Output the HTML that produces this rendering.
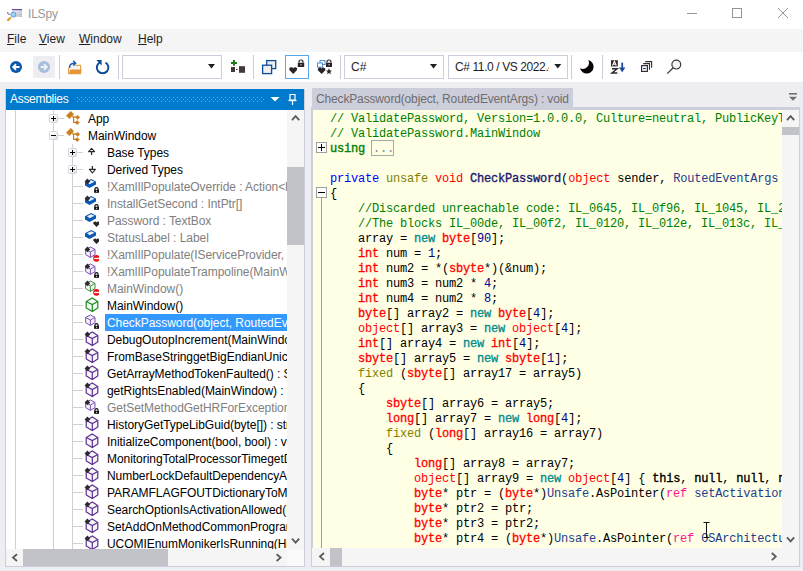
<!DOCTYPE html><html><head><meta charset="utf-8"><style>
*{margin:0;padding:0;box-sizing:border-box}
html,body{width:803px;height:571px;overflow:hidden;background:#EEEEF2;font-family:"Liberation Sans",sans-serif;font-size:12px;color:#1E1E1E}
.a{position:absolute}
svg{position:absolute;overflow:visible}
.mi{top:32px;color:#1E1E1E;letter-spacing:0px;white-space:nowrap}
.sep{top:55px;width:1px;height:24px;background:#CCCEDB}
.combo{top:55px;height:24px;border:1px solid #CCCEDB;background:#fff}
.tri{width:0;height:0;border-left:4px solid transparent;border-right:4px solid transparent;border-top:5px solid #1E1E1E}
.row{position:absolute;height:17px;white-space:nowrap;letter-spacing:-0.05px;line-height:17px;color:#000}
.g{color:#808080}
.sel{background:#3399FF;color:#fff}
.cl{position:absolute;left:330px;white-space:pre;font-family:"Liberation Mono",monospace;font-size:12px;letter-spacing:-0.2px;height:15px;line-height:15px;color:#000}
.c{color:#008000}
.kw{color:#0000FF}
.uns{color:#808000}
.rt{color:#FF0000}
.vt{color:#FF0000;-webkit-text-stroke:0.3px #FF0000}
.mc{color:#191970;-webkit-text-stroke:0.35px #191970}
.num{color:#00008B}
.nw{color:#008B8B;-webkit-text-stroke:0.3px #008B8B}
.ty{color:#1E3C8C}
.bd{-webkit-text-stroke:0.35px #000}
.rf{color:#FF1493}
.ns{color:#008000;-webkit-text-stroke:0.35px #008000}
.vl{position:absolute;width:1px;background:#D0D0D0}
.hl{position:absolute;height:1px;background:#D0D0D0}
.exp{position:absolute;width:9px;height:9px;border:1px solid #D2D2DE;border-radius:1.5px;background:linear-gradient(135deg,#FFFFFF 30%,#DCDCE6)}
</style></head><body>
<svg width="0" height="0" style="position:absolute">
<defs>
<symbol id="i_class" viewBox="0 0 16 16">
 <g fill="#CC7F1E"><path d="M6.8,1 L10,4.2 L5.5,8.9 L2,5.7 Z"/><path d="M11.2,7.3 L13.6,4.9 L16,7.3 L13.6,9.7 Z"/><path d="M10.8,12.6 L13.2,10.2 L15.6,12.6 L13.2,15 Z"/></g>
 <path d="M8,6.8 H12 M9.6,6.8 V12.4 H12" stroke="#CC7F1E" stroke-width="1.2" fill="none"/>
</symbol>
<symbol id="i_base" viewBox="0 0 16 16">
 <path d="M5.6,7.6 L8.6,4.3 L11.6,7.6 Z" fill="#fff" stroke="#2A2A2A" stroke-width="1.1" stroke-linejoin="round"/>
 <path d="M8.6,7.6 V11" stroke="#2A2A2A" stroke-width="1.2"/>
</symbol>
<symbol id="i_derived" viewBox="0 0 16 16">
 <path d="M6.4,8.4 L9.4,11.8 L12.4,8.4 Z" fill="#fff" stroke="#2A2A2A" stroke-width="1.1" stroke-linejoin="round"/>
 <path d="M9.4,5 V8.4" stroke="#2A2A2A" stroke-width="1.2"/>
</symbol>
<symbol id="slab" viewBox="0 0 16 16">
 <path d="M2,4.2 L8.1,1 L13,3.5 L13,6.5 L6.5,10 L2,7.5 Z" fill="#0A5AB4"/>
 <path d="M4,4.3 L8.1,2.2 L11.5,3.8 L6.6,6.2 Z" fill="#EAF0FA"/>
</symbol>
<symbol id="diam" viewBox="0 0 16 16"><path d="M4.4,0.6 L7.2,3.4 L4.4,6.2 L1.6,3.4 Z" fill="#2E2A30"/></symbol>
<symbol id="lock" viewBox="0 0 16 16">
 <path d="M11.9,11.9 V11.2 A1.6,1.6 0 0 1 15.1,11.2 V11.9" stroke="#111" stroke-width="1.2" fill="none"/>
 <rect x="11.1" y="11.8" width="4.9" height="3" fill="#111"/><rect x="13.1" y="12.8" width="1" height="1" fill="#fff"/>
</symbol>
<symbol id="heart" viewBox="0 0 16 16">
 <path d="M13.5,15 L10.4,11.8 A1.6,1.6 0 0 1 13.5,10.6 A1.6,1.6 0 0 1 16.6,11.8 Z" fill="#2A2224"/>
</symbol>
<symbol id="noent" viewBox="0 0 16 16">
 <circle cx="13.5" cy="12.4" r="3.3" fill="#EE1111"/><rect x="11.1" y="11.8" width="4.8" height="1.3" fill="#fff"/>
</symbol>
<symbol id="cube_sm_p" viewBox="0 0 16 16">
 <path d="M7.4,1 L12,3.4 V8.6 L7.4,11.4 L2.6,8.6 V3.4 Z" fill="#F4F2F8" stroke="#7A52B0" stroke-width="1"/>
 <path d="M2.6,3.4 L7.4,6 L12,3.4 M7.4,6 V11.4" stroke="#7A52B0" stroke-width="1" fill="none"/>
</symbol>
<symbol id="cube_sm_g" viewBox="0 0 16 16">
 <path d="M7.4,1 L12,3.4 V8.6 L7.4,11.4 L2.6,8.6 V3.4 Z" fill="#F4F6F4" stroke="#3E8E3E" stroke-width="1"/>
 <path d="M2.6,3.4 L7.4,6 L12,3.4 M7.4,6 V11.4" stroke="#3E8E3E" stroke-width="1" fill="none"/>
</symbol>
<symbol id="cube_p" viewBox="0 0 16 16">
 <path d="M9.3,1 L14.8,4.5 V11 L9.3,14.5 L3.2,11 V4.5 Z" fill="#F6F5F8" stroke="#5C2D91" stroke-width="1.2"/>
 <path d="M3.2,4.5 L9.3,7.5 L14.8,4.5 M9.3,7.5 V14.5" stroke="#5C2D91" stroke-width="1.2" fill="none"/>
</symbol>
<symbol id="cube_g" viewBox="0 0 16 16">
 <path d="M9.3,1 L14.8,4.5 V11 L9.3,14.5 L3.2,11 V4.5 Z" fill="#F6F8F6" stroke="#1C8A1C" stroke-width="1.2"/>
 <path d="M3.2,4.5 L9.3,7.5 L14.8,4.5 M9.3,7.5 V14.5" stroke="#1C8A1C" stroke-width="1.2" fill="none"/>
</symbol>
<symbol id="i_field_s_priv" viewBox="0 0 16 16"><use href="#slab"/><use href="#diam"/><use href="#lock"/></symbol>
<symbol id="i_field_int" viewBox="0 0 16 16"><use href="#slab"/><use href="#heart"/></symbol>
<symbol id="i_meth_s_cg" viewBox="0 0 16 16"><use href="#cube_sm_p"/><use href="#diam"/><use href="#noent"/></symbol>
<symbol id="i_meth_s_priv" viewBox="0 0 16 16"><use href="#cube_sm_p"/><use href="#diam"/><use href="#lock"/></symbol>
<symbol id="i_ctor_s_cg" viewBox="0 0 16 16"><use href="#cube_sm_g"/><use href="#diam"/><use href="#noent"/></symbol>
<symbol id="i_ctor" viewBox="0 0 16 16"><use href="#cube_g"/></symbol>
<symbol id="i_meth_priv" viewBox="0 0 16 16"><use href="#cube_sm_p"/><use href="#lock"/></symbol>
<symbol id="i_meth_s" viewBox="0 0 16 16"><use href="#cube_p"/><use href="#diam"/></symbol>
<symbol id="i_meth" viewBox="0 0 16 16"><use href="#cube_p"/></symbol>
<pattern id="dots" x="1" y="1" width="4" height="4" patternUnits="userSpaceOnUse">
 <rect x="0" y="0" width="1" height="1" fill="#6BB0E6"/><rect x="2" y="2" width="1" height="1" fill="#6BB0E6"/>
</pattern>
</defs></svg>
<div class="a" style="left:0;top:0;width:803px;height:29px;background:#fff"></div>
<div class="a" style="left:28px;top:7px;color:#999;letter-spacing:-0.2px">ILSpy</div>
<svg style="left:0;top:0" width="803" height="29"><g stroke="#9A9490" stroke-width="1" fill="none"><line x1="687" y1="13.5" x2="697" y2="13.5"/><rect x="732.5" y="8.5" width="9" height="9"/><line x1="778" y1="8" x2="788" y2="18"/><line x1="788" y1="8" x2="778" y2="18"/></g></svg>
<div class="a" style="left:0;top:29px;width:803px;height:23px;background:#F5F5F5"></div>
<div class="a mi" style="left:7px"><u>F</u>ile</div>
<div class="a mi" style="left:39px"><u>V</u>iew</div>
<div class="a mi" style="left:79px"><u>W</u>indow</div>
<div class="a mi" style="left:138px"><u>H</u>elp</div>
<div class="a" style="left:0;top:52px;width:803px;height:30px;background:#fff"></div>
<div class="a" style="left:33px;top:56px;width:22px;height:22px;background:#EEEEF2"></div>
<div class="a sep" style="left:59px"></div>
<div class="a sep" style="left:118px"></div>
<div class="a sep" style="left:253px"></div>
<div class="a sep" style="left:340px"></div>
<div class="a sep" style="left:571px"></div>
<div class="a sep" style="left:602px"></div>
<svg style="left:0;top:52px" width="803" height="30"><g transform="translate(0,-52)"><circle cx="16" cy="67" r="6" fill="#0E5AA8"/><path d="M19.5,67 H13.5 M16,64.2 L13.2,67 L16,69.8" stroke="#fff" stroke-width="1.8" fill="none"/><circle cx="44" cy="67" r="6" fill="#A4BEDC"/><path d="M40.5,67 H46.5 M44,64.2 L46.8,67 L44,69.8" stroke="#EEF2F8" stroke-width="1.8" fill="none"/><path d="M68.6,67.5 V73.6 H80.6 V65.4 H75.5" stroke="#E8A24E" stroke-width="1.2" fill="#F6F6F6"/><path d="M69,73.7 L70.3,69.6 H81.4 L80.6,73.7 Z" fill="#E3963C"/><path d="M69.8,67.8 C69.2,64.8 71,63.2 75.2,63.2" stroke="#1A5CB0" stroke-width="1.5" fill="none"/><path d="M73.2,60.8 L75.6,63.2 L73.2,65.6" stroke="#1A5CB0" stroke-width="1.5" fill="none"/><path d="M105.5,62.5 A5.8,5.8 0 1 1 99.7,62.5" stroke="#0E4C9A" stroke-width="2" fill="none"/><path d="M96.4,60 H101.6 V65.4 Z" fill="#0E4C9A"/><path d="M231,62.9 H237 M234,60 V65.8" stroke="#1E7B1E" stroke-width="2"/><rect x="231" y="67" width="4" height="5" fill="#403A3C"/><rect x="236" y="69" width="1.6" height="1" fill="#403A3C"/><rect x="239" y="66.2" width="6" height="6.6" fill="#403A3C"/><rect x="266.7" y="60.6" width="9" height="8" fill="#EEE" stroke="#0E4C9A" stroke-width="1.3"/><rect x="262.6" y="65.2" width="9" height="8.4" fill="#EEE" stroke="#0E4C9A" stroke-width="1.3"/><rect x="285.5" y="55.5" width="23" height="23" fill="#fff" stroke="#5AA8E6" stroke-width="1"/><path d="M293.2,74 L289.4,70 A2,2 0 0 1 293.2,68.5 A2,2 0 0 1 297,70 Z" fill="#2A2224"/><path d="M299,62.5 V62 A2,2 0 0 1 303,62 V62.5" stroke="#2A2224" stroke-width="1.2" fill="none"/><rect x="297.8" y="62.7" width="6.4" height="4.3" fill="#2A2224"/><rect x="300.4" y="64.3" width="1.2" height="1" fill="#fff"/><rect x="320" y="60.5" width="5" height="4" fill="#fff" stroke="#4A8ED8" stroke-width="1"/><rect x="317.5" y="63" width="5" height="4.2" fill="#fff" stroke="#4A8ED8" stroke-width="1"/><path d="M327,62.5 V62 A2,2 0 0 1 331,62 V62.5" stroke="#2A2224" stroke-width="1.2" fill="none"/><rect x="326" y="62.7" width="6" height="4.3" fill="#2A2224"/><rect x="328.5" y="64.3" width="1.2" height="1" fill="#fff"/><path d="M321.6,74 L317.9,70.2 A1.9,1.9 0 0 1 321.6,68.8 A1.9,1.9 0 0 1 325.3,70.2 Z" fill="#2A2224"/><path d="M329,68 L329.9,70.5 L332,70.5 L330.3,72 L331,74.3 L329,72.9 L327,74.3 L327.7,72 L326,70.5 L328.1,70.5 Z" fill="#2A2224"/><path d="M588.3,60 A6.9,6.9 0 1 1 580,68.3 A6.2,6.2 0 0 0 588.3,60 Z" fill="#0A0608"/><rect x="611" y="60.2" width="6.8" height="6.2" fill="#2E2A2C"/><path d="M612.5,65.6 L614.4,61.2 L616.3,65.6 M613.2,64.2 H615.6" stroke="#fff" stroke-width="1.1" fill="none"/><path d="M612,68.8 H617 L612,72.9 H617.3" stroke="#2E2A2C" stroke-width="1.5" fill="none"/><path d="M622.2,62.6 V68.5" stroke="#1A4C9C" stroke-width="1.8" fill="none"/><path d="M619,67.6 H625.4 L622.2,72.2 Z" fill="#1A4C9C"/><path d="M645.3,61.6 H651.6 V67.8 M643.2,63.6 H649.5 V69.8" stroke="#332E30" stroke-width="1.1" fill="none"/><rect x="641.6" y="65.6" width="5.8" height="5.8" fill="#fff" stroke="#332E30" stroke-width="1.2"/><rect x="643" y="67.9" width="3" height="1.2" fill="#1A5CB0"/><circle cx="676.3" cy="64.6" r="4.4" fill="#F4F4F4" stroke="#3A3A3A" stroke-width="1.2"/><path d="M673.2,67.7 L667.3,73.6" stroke="#3A3A3A" stroke-width="1.3"/></g></svg>
<div class="a combo" style="left:122px;width:100px"></div>
<div class="a combo" style="left:344px;width:100px"><div class="a" style="left:6px;top:4px">C#</div></div>
<div class="a combo" style="left:448px;width:120px"><div class="a" style="left:6px;top:4px;width:94px;overflow:hidden;white-space:nowrap;letter-spacing:-0.4px">C# 11.0 / VS 2022.4</div></div>
<svg style="left:0;top:0" width="803" height="90"><g fill="#1E1E1E"><path d="M208,64 H215 L211.5,68.6 Z"/><path d="M430,64 H437 L433.5,68.6 Z"/><path d="M554.3,64 H561.3 L557.8,68.6 Z"/></g></svg>
<div class="a" style="left:5px;top:89px;width:300px;height:478px;background:#fff;border:1px solid #CCCEDB;border-top:none"></div>
<div class="a" style="left:6px;top:89px;width:298px;height:21px;background:#007ACC;color:#fff"><div class="a" style="left:4px;top:3px;letter-spacing:-0.3px">Assemblies</div></div>
<svg style="left:0;top:0" width="803" height="120"><rect x="77" y="97" width="187" height="5" fill="url(#dots)"/><path d="M270.5,97 H279.5 L275,101.5 Z" fill="#fff"/><path d="M290,94.5 H295 V100 H290 Z" fill="none" stroke="#fff" stroke-width="1.2"/><path d="M288.5,100.5 H296.5" stroke="#fff" stroke-width="1.3"/><path d="M292.5,100.5 V105" stroke="#fff" stroke-width="1.2"/></svg>
<div class="a" style="left:6px;top:110px;width:281px;height:439px;overflow:hidden"><div class="vl" style="left:9px;top:0;height:439px"></div><div class="vl" style="left:47px;top:0;height:439px"></div><div class="vl" style="left:66px;top:34px;height:405px"></div><div class="hl" style="left:52px;top:8px;width:6px"></div><div class="exp" style="left:43px;top:4px"></div><div class="a" style="left:45px;top:8px;width:5px;height:1px;background:#000"></div><div class="a" style="left:47px;top:6px;width:1px;height:5px;background:#000"></div><svg style="left:58px;top:0px" width="16" height="16"><use href="#i_class"/></svg><div class="row " style="left:82px;top:1px">App</div><div class="hl" style="left:52px;top:25px;width:6px"></div><div class="exp" style="left:43px;top:21px"></div><div class="a" style="left:45px;top:25px;width:5px;height:1px;background:#000"></div><svg style="left:58px;top:17px" width="16" height="16"><use href="#i_class"/></svg><div class="row " style="left:82px;top:18px">MainWindow</div><div class="hl" style="left:71px;top:42px;width:6px"></div><div class="exp" style="left:62px;top:38px"></div><div class="a" style="left:64px;top:42px;width:5px;height:1px;background:#000"></div><div class="a" style="left:66px;top:40px;width:1px;height:5px;background:#000"></div><svg style="left:77px;top:34px" width="16" height="16"><use href="#i_base"/></svg><div class="row " style="left:101px;top:35px">Base Types</div><div class="hl" style="left:71px;top:59px;width:6px"></div><div class="exp" style="left:62px;top:55px"></div><div class="a" style="left:64px;top:59px;width:5px;height:1px;background:#000"></div><div class="a" style="left:66px;top:57px;width:1px;height:5px;background:#000"></div><svg style="left:77px;top:51px" width="16" height="16"><use href="#i_derived"/></svg><div class="row " style="left:101px;top:52px">Derived Types</div><div class="hl" style="left:66px;top:76px;width:11px"></div><svg style="left:77px;top:68px" width="16" height="16"><use href="#i_field_s_priv"/></svg><div class="row g" style="left:101px;top:69px">!XamlIlPopulateOverride : Action&lt;Func&lt;IServiceProvider, object&gt;&gt;</div><div class="hl" style="left:66px;top:93px;width:11px"></div><svg style="left:77px;top:85px" width="16" height="16"><use href="#i_field_s_priv"/></svg><div class="row g" style="left:101px;top:86px">InstallGetSecond : IntPtr[]</div><div class="hl" style="left:66px;top:110px;width:11px"></div><svg style="left:77px;top:102px" width="16" height="16"><use href="#i_field_int"/></svg><div class="row g" style="left:101px;top:103px">Password : TextBox</div><div class="hl" style="left:66px;top:127px;width:11px"></div><svg style="left:77px;top:119px" width="16" height="16"><use href="#i_field_int"/></svg><div class="row g" style="left:101px;top:120px">StatusLabel : Label</div><div class="hl" style="left:66px;top:144px;width:11px"></div><svg style="left:77px;top:136px" width="16" height="16"><use href="#i_meth_s_cg"/></svg><div class="row g" style="left:101px;top:137px">!XamlIlPopulate(IServiceProvider, MainWindow) : void</div><div class="hl" style="left:66px;top:161px;width:11px"></div><svg style="left:77px;top:153px" width="16" height="16"><use href="#i_meth_s_priv"/></svg><div class="row g" style="left:101px;top:154px">!XamlIlPopulateTrampoline(MainWindow) : void</div><div class="hl" style="left:66px;top:178px;width:11px"></div><svg style="left:77px;top:170px" width="16" height="16"><use href="#i_ctor_s_cg"/></svg><div class="row g" style="left:101px;top:171px">MainWindow()</div><div class="hl" style="left:66px;top:195px;width:11px"></div><svg style="left:77px;top:187px" width="16" height="16"><use href="#i_ctor"/></svg><div class="row " style="left:101px;top:188px">MainWindow()</div><div class="hl" style="left:66px;top:212px;width:11px"></div><svg style="left:77px;top:204px" width="16" height="16"><use href="#i_meth_priv"/></svg><div class="a sel" style="left:99px;top:204px;width:400px;height:17px"></div><div class="row" style="color:#fff;left:101px;top:205px">CheckPassword(object, RoutedEventArgs) : void</div><div class="hl" style="left:66px;top:229px;width:11px"></div><svg style="left:77px;top:221px" width="16" height="16"><use href="#i_meth_s"/></svg><div class="row " style="left:101px;top:222px">DebugOutopIncrement(MainWindow) : void</div><div class="hl" style="left:66px;top:246px;width:11px"></div><svg style="left:77px;top:238px" width="16" height="16"><use href="#i_meth_s"/></svg><div class="row " style="left:101px;top:239px">FromBaseStringgetBigEndianUnicode(byte[]) : string</div><div class="hl" style="left:66px;top:263px;width:11px"></div><svg style="left:77px;top:255px" width="16" height="16"><use href="#i_meth_s"/></svg><div class="row " style="left:101px;top:256px">GetArrayMethodTokenFaulted() : String</div><div class="hl" style="left:66px;top:280px;width:11px"></div><svg style="left:77px;top:272px" width="16" height="16"><use href="#i_meth_s"/></svg><div class="row " style="left:101px;top:273px">getRightsEnabled(MainWindow) : void</div><div class="hl" style="left:66px;top:297px;width:11px"></div><svg style="left:77px;top:289px" width="16" height="16"><use href="#i_meth_s_priv"/></svg><div class="row g" style="left:101px;top:290px">GetSetMethodGetHRForException(MainWindow) : void</div><div class="hl" style="left:66px;top:314px;width:11px"></div><svg style="left:77px;top:306px" width="16" height="16"><use href="#i_meth_s"/></svg><div class="row " style="left:101px;top:307px">HistoryGetTypeLibGuid(byte[]) : string</div><div class="hl" style="left:66px;top:331px;width:11px"></div><svg style="left:77px;top:323px" width="16" height="16"><use href="#i_meth"/></svg><div class="row " style="left:101px;top:324px">InitializeComponent(bool, bool) : void</div><div class="hl" style="left:66px;top:348px;width:11px"></div><svg style="left:77px;top:340px" width="16" height="16"><use href="#i_meth_s"/></svg><div class="row " style="left:101px;top:341px">MonitoringTotalProcessorTimegetDefault() : void</div><div class="hl" style="left:66px;top:365px;width:11px"></div><svg style="left:77px;top:357px" width="16" height="16"><use href="#i_meth_s"/></svg><div class="row " style="left:101px;top:358px">NumberLockDefaultDependencyAttribute() : void</div><div class="hl" style="left:66px;top:382px;width:11px"></div><svg style="left:77px;top:374px" width="16" height="16"><use href="#i_meth_s"/></svg><div class="row " style="left:101px;top:375px">PARAMFLAGFOUTDictionaryToManaged() : void</div><div class="hl" style="left:66px;top:399px;width:11px"></div><svg style="left:77px;top:391px" width="16" height="16"><use href="#i_meth_s"/></svg><div class="row " style="left:101px;top:392px">SearchOptionIsActivationAllowed(MainWindow) : void</div><div class="hl" style="left:66px;top:416px;width:11px"></div><svg style="left:77px;top:408px" width="16" height="16"><use href="#i_meth_s"/></svg><div class="row " style="left:101px;top:409px">SetAddOnMethodCommonProgramFiles(MainWindow) : void</div><div class="hl" style="left:66px;top:433px;width:11px"></div><svg style="left:77px;top:425px" width="16" height="16"><use href="#i_meth_s"/></svg><div class="row " style="left:101px;top:426px">UCOMIEnumMonikerIsRunning(HistoryGetTypeLibGuid) : void</div></div>
<div class="a" style="left:287px;top:110px;width:17px;height:439px;background:#F5F5F5"></div>
<div class="a" style="left:287px;top:167px;width:17px;height:78px;background:#C2C3C9"></div>
<div class="a" style="left:6px;top:549px;width:281px;height:17px;background:#F5F5F5"></div>
<div class="a" style="left:23px;top:549px;width:145px;height:17px;background:#C2C3C9"></div>
<div class="a" style="left:312px;top:88px;width:261px;height:20px;background:#CCCEDB;color:#6D6D6D"><div class="a" style="left:4px;top:4px;white-space:nowrap;letter-spacing:-0.15px">CheckPassword(object, RoutedEventArgs) : void</div></div>
<div class="a" style="left:311px;top:107px;width:489px;height:3px;background:#CCCEDB"></div>
<div class="a" style="left:311px;top:110px;width:489px;height:457px;background:#FFFFE6;border-left:2px solid #CCCEDB;border-right:1px solid #CCCEDB;border-bottom:1px solid #CCCEDB"></div>
<div class="a" style="left:313px;top:110px;width:469px;height:438px;overflow:hidden"><div class="cl" style="left:17px;top:2px"><span class="c">// ValidatePassword, Version=1.0.0.0, Culture=neutral, PublicKeyToken=null</span></div><div class="cl" style="left:17px;top:17px"><span class="c">// ValidatePassword.MainWindow</span></div><div class="cl" style="left:17px;top:32px"><span class="ns">using</span></div><div class="cl" style="left:17px;top:47px"></div><div class="cl" style="left:17px;top:62px"><span class="kw">private</span> <span class="uns">unsafe</span> <span class="rt">void</span> <span class="mc">CheckPassword</span>(<span class="rt">object</span> sender, <span class="ty">RoutedEventArgs</span> e)</div><div class="cl" style="left:17px;top:77px">{</div><div class="cl" style="left:17px;top:92px">    <span class="c">//Discarded unreachable code: IL_0645, IL_0f96, IL_1045, IL_2093</span></div><div class="cl" style="left:17px;top:107px">    <span class="c">//The blocks IL_00de, IL_00f2, IL_0120, IL_012e, IL_013c, IL_0150</span></div><div class="cl" style="left:17px;top:122px">    array = <span class="nw">new</span> <span class="vt">byte</span>[<span class="num">90</span>];</div><div class="cl" style="left:17px;top:137px">    <span class="vt">int</span> num = <span class="num">1</span>;</div><div class="cl" style="left:17px;top:152px">    <span class="vt">int</span> num2 = *(<span class="vt">sbyte</span>*)(&amp;num);</div><div class="cl" style="left:17px;top:167px">    <span class="vt">int</span> num3 = num2 * <span class="num">4</span>;</div><div class="cl" style="left:17px;top:182px">    <span class="vt">int</span> num4 = num2 * <span class="num">8</span>;</div><div class="cl" style="left:17px;top:197px">    <span class="vt">byte</span>[] array2 = <span class="nw">new</span> <span class="vt">byte</span>[<span class="num">4</span>];</div><div class="cl" style="left:17px;top:212px">    <span class="rt">object</span>[] array3 = <span class="nw">new</span> <span class="rt">object</span>[<span class="num">4</span>];</div><div class="cl" style="left:17px;top:227px">    <span class="vt">int</span>[] array4 = <span class="nw">new</span> <span class="vt">int</span>[<span class="num">4</span>];</div><div class="cl" style="left:17px;top:242px">    <span class="vt">sbyte</span>[] array5 = <span class="nw">new</span> <span class="vt">sbyte</span>[<span class="num">1</span>];</div><div class="cl" style="left:17px;top:257px">    <span class="uns">fixed</span> (<span class="vt">sbyte</span>[] array17 = array5)</div><div class="cl" style="left:17px;top:272px">    {</div><div class="cl" style="left:17px;top:287px">        <span class="vt">sbyte</span>[] array6 = array5;</div><div class="cl" style="left:17px;top:302px">        <span class="vt">long</span>[] array7 = <span class="nw">new</span> <span class="vt">long</span>[<span class="num">4</span>];</div><div class="cl" style="left:17px;top:317px">        <span class="uns">fixed</span> (<span class="vt">long</span>[] array16 = array7)</div><div class="cl" style="left:17px;top:332px">        {</div><div class="cl" style="left:17px;top:347px">            <span class="vt">long</span>[] array8 = array7;</div><div class="cl" style="left:17px;top:362px">            <span class="rt">object</span>[] array9 = <span class="nw">new</span> <span class="rt">object</span>[<span class="num">4</span>] { <span class="bd">this</span>, <span class="bd">null</span>, <span class="bd">null</span>, <span class="bd">null</span> };</div><div class="cl" style="left:17px;top:377px">            <span class="vt">byte</span>* ptr = (<span class="vt">byte</span>*)<span class="ty">Unsafe</span>.AsPointer(<span class="rf">ref</span> <span class="ty">setActivationContext</span>);</div><div class="cl" style="left:17px;top:392px">            <span class="vt">byte</span>* ptr2 = ptr;</div><div class="cl" style="left:17px;top:407px">            <span class="vt">byte</span>* ptr3 = ptr2;</div><div class="cl" style="left:17px;top:422px">            <span class="vt">byte</span>* ptr4 = (<span class="vt">byte</span>*)<span class="ty">Unsafe</span>.AsPointer(<span class="rf">ref</span> <span class="ty">OSArchitecture</span>);</div><div class="a" style="left:3px;top:32px;width:11px;height:11px;border:1px solid #A0A0A0;background:#fff"></div><div class="a" style="left:5px;top:37px;width:7px;height:1px;background:#000"></div><div class="a" style="left:8px;top:34px;width:1px;height:7px;background:#000"></div><div class="a" style="left:58px;top:30px;width:23px;height:16px;border:1px solid #A8A8A8"></div><div class="cl" style="left:60px;top:32px;color:#7A8AA0">...</div><div class="a" style="left:3px;top:77px;width:11px;height:11px;border:1px solid #A0A0A0;background:#fff"></div><div class="a" style="left:5px;top:82px;width:7px;height:1px;background:#000"></div><div class="a" style="left:8px;top:88px;width:1px;height:350px;background:#A0A0A0"></div></div>
<div class="a" style="left:782px;top:110px;width:17px;height:438px;background:#F5F5F5"></div>
<div class="a" style="left:782px;top:127px;width:17px;height:8px;background:#C2C3C9"></div>
<div class="a" style="left:312px;top:548px;width:487px;height:18px;background:#F5F5F5"></div>
<div class="a" style="left:330px;top:548px;width:12px;height:18px;background:#C2C3C9"></div>
<div class="a" style="left:287px;top:549px;width:17px;height:17px;background:#FAFAFA"></div>
<svg style="left:0;top:0" width="803" height="571"><g stroke="#5A5A5A" stroke-width="1.8" fill="none" stroke-linecap="butt"><path d="M292,120.2 L295.6,116.2 L299.2,120.2"/><path d="M292,538.6 L295.6,542.6 L299.2,538.6"/><path d="M17,554.2 L13,557.6 L17,561"/><path d="M276.6,554.2 L280.6,557.6 L276.6,561"/><path d="M787,120.2 L790.6,116.2 L794.2,120.2"/><path d="M787,537.4 L790.6,541.4 L794.2,537.4"/><path d="M324,553 L320,556.6 L324,560.2"/><path d="M771.8,553 L775.8,556.6 L771.8,560.2"/></g><path d="M703.5,522.5 H709.5 M706.5,522.5 V537.5 M703.5,537.5 H709.5" stroke="#111" stroke-width="1"/><path d="M789,93.8 H797" stroke="#717171" stroke-width="1.6"/><path d="M789,96.8 H797 L793,100.8 Z" fill="#717171"/></svg>
<svg style="left:0;top:0" width="30" height="29"><defs><linearGradient id="tg" x1="0" y1="0" x2="1" y2="1"><stop offset="0" stop-color="#F4F4F8"/><stop offset="1" stop-color="#B8B8CC"/></linearGradient></defs><rect x="12" y="9.5" width="10" height="7.3" fill="url(#tg)"/><path d="M12,9.6 H22" stroke="#6A4A9A" stroke-width="1.2"/><path d="M21.6,16.6 L22,16.8" stroke="#5A6AA0" stroke-width="1"/><circle cx="13.4" cy="14.6" r="2.5" fill="#9ED2F4" stroke="#4C8ED0" stroke-width="0.8"/><path d="M10.8,17.4 L7.4,20.8" stroke="#D8921E" stroke-width="2"/><path d="M8,12 A1.3,1.3 0 0 0 9,14.2 H10" stroke="#6A4A9A" stroke-width="1" fill="none"/></svg>
</body></html>
